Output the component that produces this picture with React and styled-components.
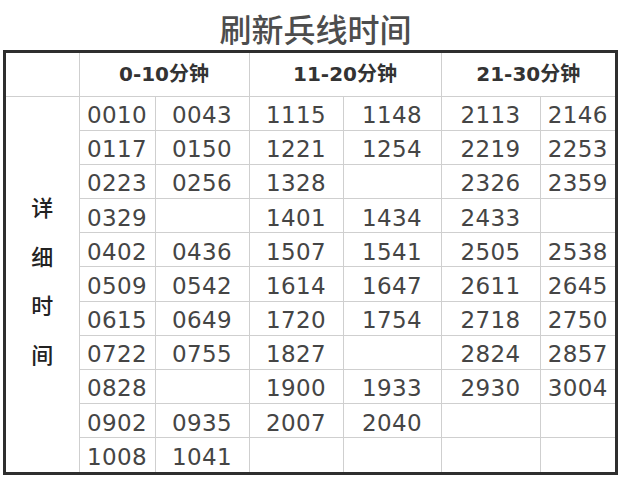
import React from 'react';
import styled, { createGlobalStyle } from 'styled-components';

const GlobalStyle = createGlobalStyle`
  body {
    margin: 0;
    background: #ffffff;
    font-family: "DejaVu Sans", "Noto Sans CJK SC", sans-serif;
  }
`;

const Page = styled.div`
  width: 623px;
  height: 480px;
  overflow: hidden;
`;

const Title = styled.h1`
  margin: 0;
  height: 50px;
  line-height: 56px;
  text-align: center;
  font-family: "Noto Sans CJK SC", sans-serif;
  font-size: 32px;
  font-weight: 500;
  color: #4d4d4d;
  padding-left: 8px;
`;

const Frame = styled.div`
  margin-left: 3px;
  width: 609px;
  height: 419px;
  border: 3px solid #2e2e2e;
`;

const Table = styled.table`
  width: 609px;
  height: 419px;
  border-collapse: collapse;
  border-style: hidden;
  table-layout: fixed;
`;

const HeadRow = styled.tr`
  height: 43px;
`;

const BodyRow = styled.tr`
  height: 34.18px;
`;

const HeadCell = styled.th`
  border: 1px solid #cfcfcf;
  font-family: "DejaVu Sans", "Noto Sans CJK SC", sans-serif;
  font-size: 20px;
  font-weight: 600;
  color: #333333;
  text-align: center;
  padding: 0 0 3px;
`;

const Cell = styled.td`
  border: 1px solid #cfcfcf;
  font-size: 23px;
  letter-spacing: 0.4px;
  color: #454545;
  text-align: center;
  padding: 4px 0 0;
`;

const LabelCell = styled.td`
  border: 1px solid #cfcfcf;
  padding: 0 0 8px;
  vertical-align: middle;
`;

const LabelStack = styled.div`
  display: flex;
  flex-direction: column;
  align-items: center;
  font-family: "Noto Sans CJK SC", sans-serif;
  font-size: 22px;
  font-weight: 500;
  line-height: 49px;
  color: #222222;
`;

const groups = ['0-10分钟', '11-20分钟', '21-30分钟'];

const rows = [
  ['0010', '0043', '1115', '1148', '2113', '2146'],
  ['0117', '0150', '1221', '1254', '2219', '2253'],
  ['0223', '0256', '1328', '', '2326', '2359'],
  ['0329', '', '1401', '1434', '2433', ''],
  ['0402', '0436', '1507', '1541', '2505', '2538'],
  ['0509', '0542', '1614', '1647', '2611', '2645'],
  ['0615', '0649', '1720', '1754', '2718', '2750'],
  ['0722', '0755', '1827', '', '2824', '2857'],
  ['0828', '', '1900', '1933', '2930', '3004'],
  ['0902', '0935', '2007', '2040', '', ''],
  ['1008', '1041', '', '', '', ''],
];

const widths = [73, 76, 94, 94, 98, 99, 75];

export default function App() {
  return (
    <Page>
      <GlobalStyle />
      <Title>刷新兵线时间</Title>
      <Frame>
        <Table>
          <colgroup>
            {widths.map((w, i) => (
              <col key={i} style={{ width: w }} />
            ))}
          </colgroup>
          <thead>
            <HeadRow>
              <HeadCell />
              {groups.map((g) => (
                <HeadCell key={g} colSpan={2}>{g}</HeadCell>
              ))}
            </HeadRow>
          </thead>
          <tbody>
            {rows.map((r, i) => (
              <BodyRow key={i}>
                {i === 0 && (
                  <LabelCell rowSpan={rows.length}>
                    <LabelStack>
                      {['详', '细', '时', '间'].map((c) => (
                        <span key={c}>{c}</span>
                      ))}
                    </LabelStack>
                  </LabelCell>
                )}
                {r.map((v, j) => (
                  <Cell key={j}>{v}</Cell>
                ))}
              </BodyRow>
            ))}
          </tbody>
        </Table>
      </Frame>
    </Page>
  );
}
